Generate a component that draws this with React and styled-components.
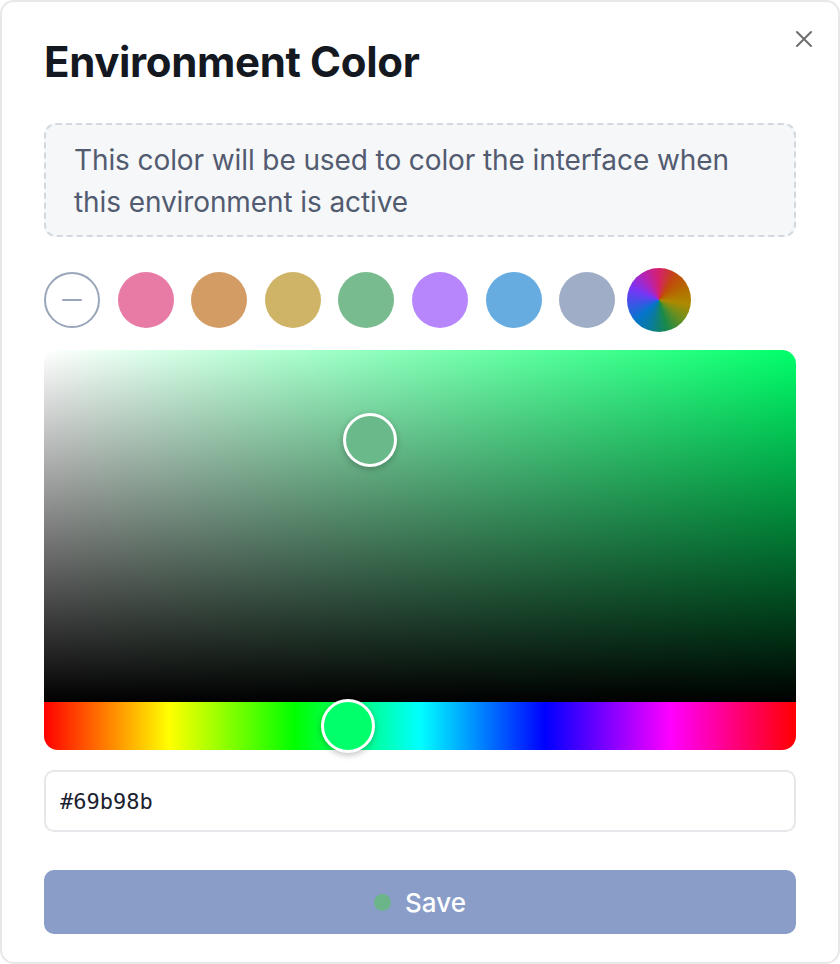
import React from "react";
import styled, { createGlobalStyle } from "styled-components";

const Global = createGlobalStyle`
  html, body { margin: 0; padding: 0; background: #ffffff; }
  * { box-sizing: border-box; }
`;

const Dialog = styled.div`
  position: relative;
  width: 840px;
  height: 964px;
  background: #ffffff;
  border: 2px solid #e8e8e8;
  border-radius: 14px;
  padding: 36px 42px 0 42px;
  display: flex;
  flex-direction: column;
  font-family: Inter, "Noto Sans", sans-serif;
`;

const Title = styled.h1`
  margin: 0;
  font-size: 42px;
  line-height: 48px;
  font-weight: 700;
  color: #141821;
  letter-spacing: -0.35px;
`;

const Close = styled.button`
  position: absolute;
  top: 26px;
  right: 23px;
  width: 22px;
  height: 22px;
  padding: 0;
  border: none;
  background: transparent;
  display: flex;
  align-items: center;
  justify-content: center;
  cursor: pointer;
`;

const Info = styled.div`
  margin-top: 37px;
  height: 114px;
  border: 2px dashed #d3d7df;
  background: #f6f7f9;
  border-radius: 12px;
  padding: 14px 40px 14px 28px;
  font-size: 28px;
  line-height: 42px;
  color: #525b70;
  letter-spacing: -0.1px;
`;

const Swatches = styled.div`
  margin-top: 31px;
  height: 64px;
  display: flex;
  align-items: center;
  gap: 17.6px;
`;

const Swatch = styled.div`
  width: 56px;
  height: 56px;
  border-radius: 50%;
  background: ${(p) => p.$color};
  flex: none;
`;

const NoneSwatch = styled.div`
  width: 56px;
  height: 56px;
  border-radius: 50%;
  border: 2px solid #9ba5ba;
  display: flex;
  align-items: center;
  justify-content: center;
  flex: none;
  &::after {
    content: "";
    width: 20px;
    height: 2px;
    background: #9ba5ba;
    border-radius: 1px;
  }
`;

const RainbowSwatch = styled.div`
  width: 64px;
  height: 64px;
  border-radius: 50%;
  margin-left: -6px;
  flex: none;
  background: conic-gradient(
    #d6206c,
    #c2480e,
    #b46a00,
    #ad8a00,
    #6a8f20,
    #1a8a48,
    #0a7c9a,
    #0575cc,
    #3b55e6,
    #7a35f6,
    #b224b8,
    #d6206c
  );
`;

const Picker = styled.div`
  margin-top: 18px;
  display: flex;
  flex-direction: column;
  border-radius: 14px;
`;

const SatArea = styled.div`
  position: relative;
  height: 352px;
  border-radius: 14px 14px 0 0;
  background:
    linear-gradient(to top, #000000, rgba(0, 0, 0, 0)),
    linear-gradient(to right, #ffffff, ${(p) => p.$hue});
`;

const HueBar = styled.div`
  position: relative;
  height: 48px;
  border-radius: 0 0 14px 14px;
  background: linear-gradient(
    to right,
    #ff0000 0%,
    #ffff00 16.67%,
    #00ff00 33.33%,
    #00ffff 50%,
    #0000ff 66.67%,
    #ff00ff 83.33%,
    #ff0000 100%
  );
`;

const Thumb = styled.div`
  position: absolute;
  width: 54px;
  height: 54px;
  border-radius: 50%;
  border: 3px solid #ffffff;
  background: ${(p) => p.$color};
  transform: translate(-50%, -50%);
  box-shadow: 0 2px 6px rgba(0, 0, 0, 0.25);
`;

const HexInput = styled.input`
  margin-top: 20px;
  height: 62px;
  width: 100%;
  border: 2px solid #e6e7ea;
  border-radius: 10px;
  padding: 0 14px;
  font-family: "DejaVu Sans Mono", "Liberation Mono", monospace;
  font-size: 22px;
  color: #1c2230;
  outline: none;
  background: #ffffff;
`;

const SaveButton = styled.button`
  margin-top: 38px;
  height: 64px;
  width: 100%;
  border: none;
  border-radius: 10px;
  background: #8a9dc8;
  color: #ffffff;
  font-family: Inter, "Noto Sans", sans-serif;
  font-size: 26px;
  font-weight: 500;
  display: flex;
  align-items: center;
  justify-content: center;
  gap: 14px;
  cursor: pointer;
`;

const Dot = styled.span`
  width: 17px;
  height: 17px;
  border-radius: 50%;
  background: ${(p) => p.$color};
`;

const colors = ["#e87aa6", "#d49c65", "#cfb468", "#78bb8f", "#b886fc", "#66ace0", "#a0adc6"];

export default function App() {
  const hue = "#00ff6a";
  const sat = 0.433;
  const val = 0.745;
  return (
    <>
      <Global />
      <Dialog>
        <Title>Environment Color</Title>
        <Close aria-label="Close">
          <svg width="18" height="18" viewBox="0 0 18 18">
            <path d="M2 2 L16 16 M16 2 L2 16" stroke="#6e6e6e" strokeWidth="2" strokeLinecap="round" />
          </svg>
        </Close>
        <Info>This color will be used to color the interface when this environment is active</Info>
        <Swatches>
          <NoneSwatch />
          {colors.map((c) => (
            <Swatch key={c} $color={c} />
          ))}
          <RainbowSwatch />
        </Swatches>
        <Picker>
          <SatArea $hue={hue}>
            <Thumb $color="#69b98b" style={{ left: `${sat * 100}%`, top: `${(1 - val) * 100}%` }} />
          </SatArea>
          <HueBar>
            <Thumb $color={hue} style={{ left: `${(145.5 / 360) * 100}%`, top: "50%" }} />
          </HueBar>
        </Picker>
        <HexInput defaultValue="#69b98b" />
        <SaveButton>
          <Dot $color="#6cb58a" />
          Save
        </SaveButton>
      </Dialog>
    </>
  );
}
